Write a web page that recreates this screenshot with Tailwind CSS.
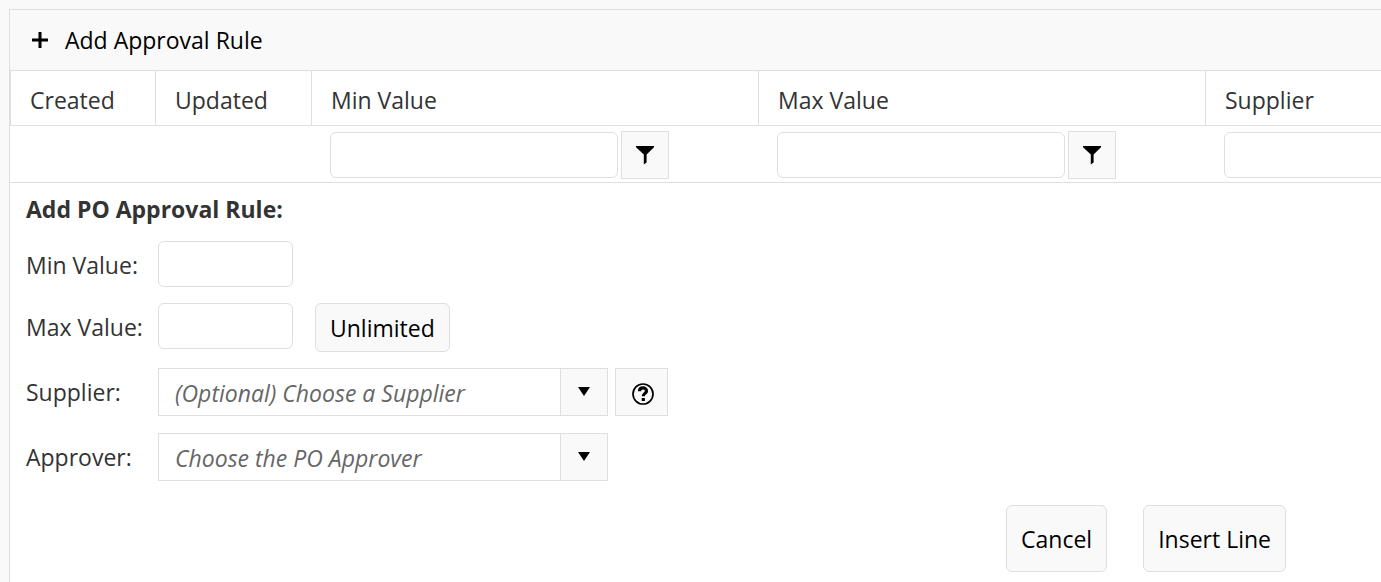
<!DOCTYPE html>
<html lang="en">
<head>
  <meta charset="UTF-8" />
  <meta name="viewport" content="width=device-width, initial-scale=1.0"/>
  <title>PO Approval Rules</title>
  <script src="https://cdn.jsdelivr.net/npm/@tailwindcss/browser@4"></script>
</head>
<body class="bg-[#f9f9f9] min-h-screen pl-[9px] pt-[9px] overflow-hidden flex flex-col font-['Open_Sans',sans-serif] text-[23px] leading-8 text-[#333333]">

  <main class="grow bg-white border-l border-t border-[#dfdfdf]">

    <!-- Toolbar -->
    <div class="bg-[#f9f9f9] border-b border-[#dfdfdf] h-[61px] px-[21px] flex items-center">
      <button type="button" class="flex items-center gap-4 text-black">
        <svg class="w-[18px] h-[18px]" viewBox="0 0 18 18" fill="none" stroke="currentColor" stroke-width="3" aria-hidden="true">
          <path d="M9 1v16M1 9h16" />
        </svg>
        Add Approval Rule
      </button>
    </div>

    <!-- Rules grid -->
    <div class="overflow-hidden">
      <table class="table-fixed w-[1642px] border-separate border-spacing-0 text-left">
        <colgroup>
          <col class="w-[145px]" />
          <col class="w-[156px]" />
          <col class="w-[447px]" />
          <col class="w-[447px]" />
          <col class="w-[447px]" />
        </colgroup>
        <thead>
          <tr class="h-[55px]">
            <th class="font-normal pl-[19px] pt-1 border-b border-l border-[#dfdfdf]">Created</th>
            <th class="font-normal pl-[19px] pt-1 border-b border-l border-[#dfdfdf]">Updated</th>
            <th class="font-normal pl-[19px] pt-1 border-b border-l border-[#dfdfdf]">Min Value</th>
            <th class="font-normal pl-[19px] pt-1 border-b border-l border-[#dfdfdf]">Max Value</th>
            <th class="font-normal pl-[19px] pt-1 border-b border-l border-[#dfdfdf]">Supplier</th>
          </tr>
        </thead>
        <tbody>
          <tr class="h-[57px]">
            <td class="border-b border-[#dfdfdf]"></td>
            <td class="border-b border-[#dfdfdf]"></td>
            <td class="border-b border-[#dfdfdf] pl-[19px] pt-[2px]">
              <div class="flex items-center gap-[3px]">
                <input type="text" aria-label="Filter by min value" class="w-[288px] h-[46px] px-4 border border-[#dfdfdf] rounded-md" />
                <button type="button" aria-label="Min value filter" class="size-12 border border-[#dfdfdf] bg-[#f9f9f9] text-black flex items-center justify-center">
                  <svg class="size-5" viewBox="0 0 20 20" fill="currentColor" aria-hidden="true"><path d="M1 1h18v1.200L11.600 9.500V17.500L8.800 19.500V9.500L1 2.200z" /></svg>
                </button>
              </div>
            </td>
            <td class="border-b border-[#dfdfdf] pl-[19px] pt-[2px]">
              <div class="flex items-center gap-[3px]">
                <input type="text" aria-label="Filter by max value" class="w-[288px] h-[46px] px-4 border border-[#dfdfdf] rounded-md" />
                <button type="button" aria-label="Max value filter" class="size-12 border border-[#dfdfdf] bg-[#f9f9f9] text-black flex items-center justify-center">
                  <svg class="size-5" viewBox="0 0 20 20" fill="currentColor" aria-hidden="true"><path d="M1 1h18v1.200L11.600 9.500V17.500L8.800 19.500V9.500L1 2.200z" /></svg>
                </button>
              </div>
            </td>
            <td class="border-b border-[#dfdfdf] pl-[19px] pt-[2px]">
              <div class="flex items-center gap-[3px]">
                <input type="text" aria-label="Filter by supplier" class="w-[288px] h-[46px] px-4 border border-[#dfdfdf] rounded-md" />
              </div>
            </td>
          </tr>
        </tbody>
      </table>
    </div>

    <!-- Insert form -->
    <form class="pl-4 pr-[95px] pt-[10px]">
      <h2 class="font-bold mb-4">Add PO Approval Rule:</h2>

      <div class="flex flex-col gap-4">
        <div class="flex items-start">
          <label for="min" class="w-[132px] pt-2">Min Value:</label>
          <input id="min" type="text" class="w-[135px] h-[46px] px-4 border border-[#dfdfdf] rounded-md" />
        </div>

        <div class="flex items-start">
          <label for="max" class="w-[132px] pt-2">Max Value:</label>
          <input id="max" type="text" class="w-[135px] h-[46px] px-4 border border-[#dfdfdf] rounded-md" />
          <button type="button" class="ml-[22px] h-[49px] px-[14px] border border-[#dfdfdf] rounded-md bg-[#f9f9f9] text-black">Unlimited</button>
        </div>

        <div class="flex items-start min-h-[49px]">
          <label for="supplier" class="w-[132px] pt-2">Supplier:</label>
          <div class="relative w-[450px]">
            <select id="supplier" class="block w-full h-12 pl-4 pt-[2px] border border-[#dfdfdf] appearance-none italic text-[#666666]">
              <option>(Optional) Choose a Supplier</option>
            </select>
            <span class="absolute right-0 inset-y-0 w-12 border border-[#dfdfdf] bg-[#f9f9f9] text-black flex items-center justify-center pointer-events-none">
              <svg class="w-3 h-[10px]" viewBox="0 0 12 10" fill="currentColor" aria-hidden="true"><path d="M0 0h12L6 9z" /></svg>
            </span>
          </div>
          <button type="button" aria-label="Help" class="ml-[7px] w-[53px] h-12 pt-1 pl-[2px] border border-[#dfdfdf] bg-[#f9f9f9] text-black flex items-center justify-center">
            <svg class="size-[22px]" viewBox="0 0 22 22" fill="none" stroke="currentColor" aria-hidden="true">
              <circle cx="11" cy="11" r="10" stroke-width="1.700" />
              <path d="M7.500 8.300C7.500 5.700 9.200 4.900 11 4.900s3.500 1.100 3.500 3c0 2.500-3.200 2.500-3.200 5.300" stroke-width="3.200" />
              <path d="M9.700 15h3.200v3H9.700z" fill="currentColor" stroke="none" />
            </svg>
          </button>
        </div>

        <div class="flex items-start">
          <label for="approver" class="w-[132px] pt-2">Approver:</label>
          <div class="relative w-[450px]">
            <select id="approver" class="block w-full h-12 pl-4 pt-[2px] border border-[#dfdfdf] appearance-none italic text-[#666666]">
              <option>Choose the PO Approver</option>
            </select>
            <span class="absolute right-0 inset-y-0 w-12 border border-[#dfdfdf] bg-[#f9f9f9] text-black flex items-center justify-center pointer-events-none">
              <svg class="w-3 h-[10px]" viewBox="0 0 12 10" fill="currentColor" aria-hidden="true"><path d="M0 0h12L6 9z" /></svg>
            </span>
          </div>
        </div>
      </div>

      <div class="flex justify-end gap-9 mt-6">
        <button type="button" class="h-[67px] px-[14px] border border-[#dfdfdf] rounded-md bg-[#f9f9f9] text-black">Cancel</button>
        <button type="submit" class="h-[67px] px-[14px] border border-[#dfdfdf] rounded-md bg-[#f9f9f9] text-black">Insert Line</button>
      </div>
    </form>
  </main>

</body>
</html>
